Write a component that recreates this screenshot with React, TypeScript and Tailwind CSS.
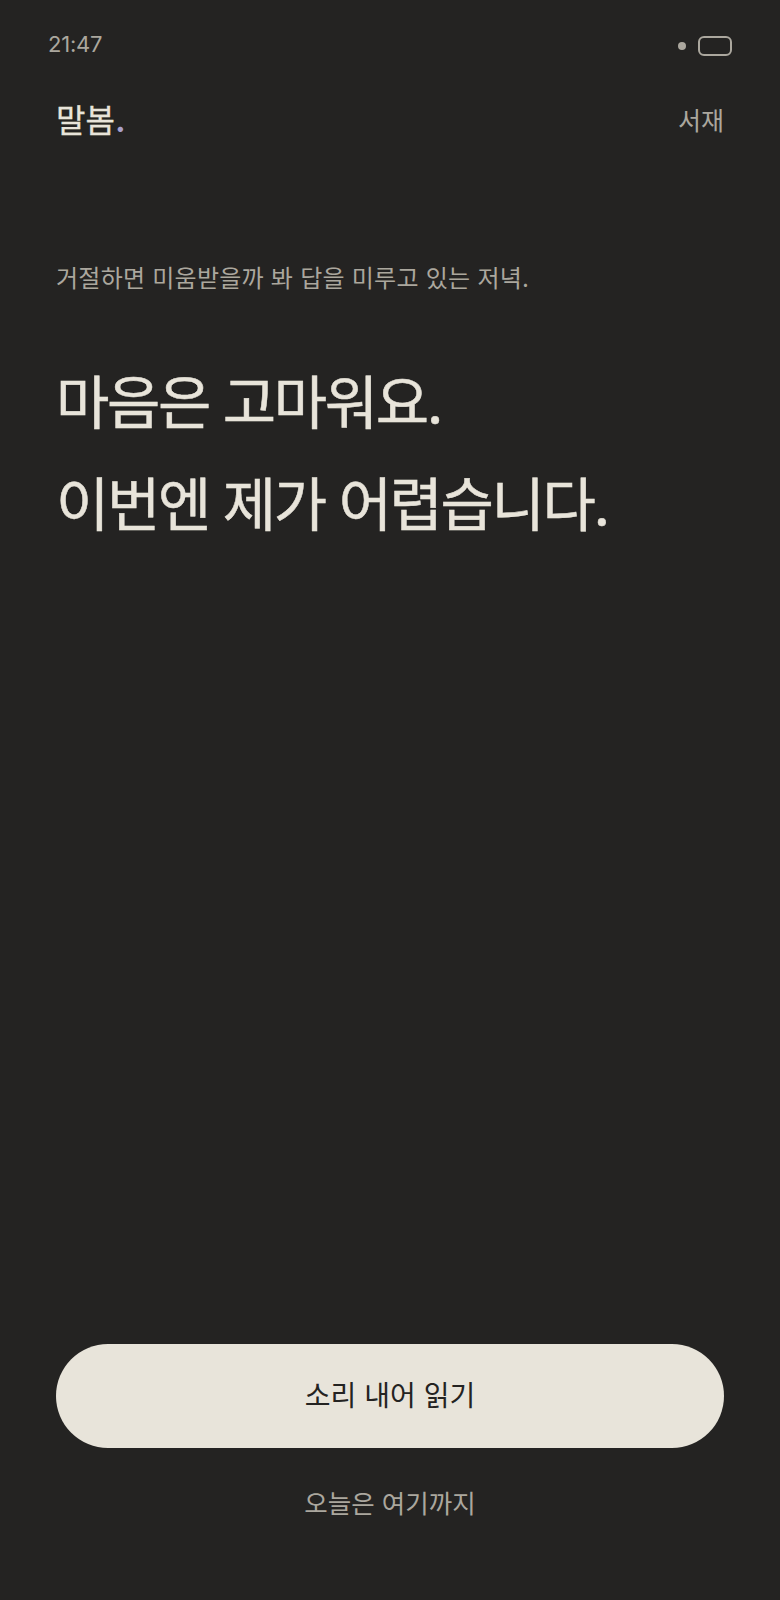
export default function App() {
  return (
    <div className="w-[780px] h-[1600px] bg-[#242322] flex flex-col font-['Inter','Noto_Sans_CJK_KR',sans-serif]">
      {/* status bar */}
      <div className="h-[90px] pl-[48px] pr-[48px] flex items-center justify-between">
        <span className="text-[22px] text-[#aba79e] tracking-[-0.2px] mb-[2px]">21:47</span>
        <div className="flex items-center gap-[12px] mt-[1px]">
          <div className="w-[8px] h-[8px] rounded-full bg-[#aba79e]"></div>
          <div className="w-[34px] h-[20px] rounded-[6px] border-2 border-[#aba79e]"></div>
        </div>
      </div>

      {/* header */}
      <div className="px-[56px] mt-[9px] flex items-center justify-between">
        <div className="text-[32px] text-[#e8e4da] leading-[44px] tracking-[0.1px] [-webkit-text-stroke:0.3px_#e8e4da]">
          말봄<span className="text-[#a8a0cc] font-bold [-webkit-text-stroke:0]">.</span>
        </div>
        <button className="text-[25px] text-[#aba79e] leading-[44px]">서재</button>
      </div>

      {/* sentence */}
      <div className="px-[56px] flex-1">
        <p className="mt-[118px] text-[24px] tracking-[0.24px] leading-[36px] text-[#aba79e]">거절하면 미움받을까 봐 답을 미루고 있는 저녁.</p>
        <h1 className="mt-[55px] text-[58px] leading-[102px] tracking-[-2.4px] text-[#e8e4da] [-webkit-text-stroke:0.5px_#e8e4da]">
          마음은 고마워요.
          <br />
          이번엔 제가 어렵습니다.
        </h1>
      </div>

      {/* actions */}
      <div className="px-[56px] pb-[74px] flex flex-col items-center">
        <button className="w-full h-[104px] rounded-full bg-[#e8e4da] text-[#242322] text-[28px]">소리 내어 읽기</button>
        <button className="mt-[34px] h-[44px] text-[25.5px] text-[#aba79e]">오늘은 여기까지</button>
      </div>
    </div>
  );
}
